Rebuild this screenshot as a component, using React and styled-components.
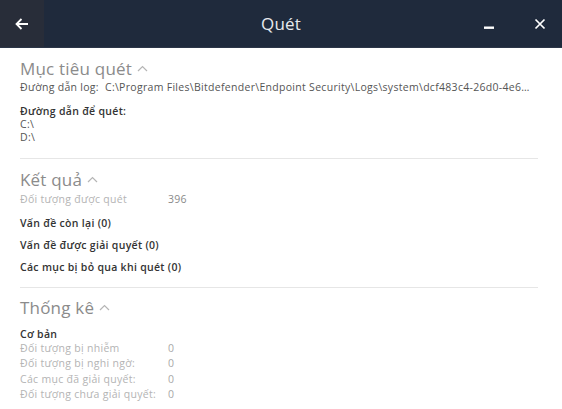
import React from "react";
import styled, { createGlobalStyle } from "styled-components";

const Global = createGlobalStyle`
  html, body { margin: 0; padding: 0; background: #fff; }
  body { font-family: "Open Sans", "Noto Sans", sans-serif; }
  * { box-sizing: border-box; }
`;

const Window = styled.div`
  width: 562px;
  height: 409px;
  background: #fff;
  overflow: hidden;
  display: flex;
  flex-direction: column;
`;

const Header = styled.header`
  height: 48px;
  flex: none;
  background: #1f2a3c;
  display: flex;
  align-items: stretch;
  border-bottom: 1px solid #2c3648;
`;

const BackButton = styled.div`
  width: 44px;
  background: #282d39;
  display: flex;
  align-items: center;
  justify-content: center;
  color: #fff;
`;

const Title = styled.div`
  flex: 1;
  display: flex;
  align-items: center;
  justify-content: center;
  color: #e8eaee;
  font-size: 17px;
  letter-spacing: 0.2px;
  padding-left: 51px;
`;

const Controls = styled.div`
  display: flex;
  align-items: stretch;
  gap: 7px;
`;

const CtrlBtn = styled.div`
  width: 44px;
  display: flex;
  align-items: center;
  justify-content: center;
  color: #fff;
`;

const Content = styled.main`
  padding: 3px 24px 0 20px;
  display: flex;
  flex-direction: column;
`;

const Section = styled.section`
  padding: 4px 0 ${p => p.$pb || 14}px;
  border-bottom: ${p => (p.$last ? "none" : "1px solid #e6e6e6")};
  margin-bottom: 3px;
`;

const Heading = styled.h2`
  margin: 0;
  font-weight: 400;
  font-size: 17px;
  letter-spacing: 0.2px;
  color: #8b8b8b;
  display: flex;
  align-items: center;
  gap: 5px;
  height: 26px;
`;

const Line = styled.div`
  font-size: 10.5px;
  letter-spacing: 0.3px;
  line-height: 13px;
  color: ${p => (p.$strong ? "#333" : "#555")};
  font-weight: ${p => (p.$strong ? 600 : 400)};
  margin-top: ${p => p.$mt || 0}px;
  white-space: nowrap;
`;

const KV = styled.div`
  display: grid;
  grid-template-columns: 148px auto;
  font-size: 10.5px;
  letter-spacing: 0.3px;
  line-height: 15.5px;
  color: #b4b4b4;
  margin-top: ${p => p.$mt || 0}px;
  margin-bottom: ${p => p.$mb || 0}px;
  white-space: nowrap;
`;

const Value = styled.span`
  color: ${p => (p.$dark ? "#8a8a8a" : "#a8a8a8")};
`;

const Issue = styled.div`
  font-size: 10.5px;
  letter-spacing: 0.3px;
  font-weight: 600;
  color: #333;
  line-height: 22px;
`;

const Issues = styled.div`
  margin-top: 4px;
`;

const Chevron = () => (
  <svg width="11" height="7" viewBox="0 0 11 7" fill="none">
    <path d="M1 6 L5.5 1.5 L10 6" stroke="#b5b5b5" strokeWidth="1.2" />
  </svg>
);

export default function App() {
  return (
    <Window>
      <Global />
      <Header>
        <BackButton>
          <svg width="14" height="12" viewBox="0 0 14 12" fill="none">
            <path d="M13 6 H1.5 M6.5 1 L1.5 6 L6.5 11" stroke="#fff" strokeWidth="1.8" />
          </svg>
        </BackButton>
        <Title>Quét</Title>
        <Controls>
          <CtrlBtn>
            <svg width="12" height="12" viewBox="0 0 12 12">
              <rect x="1" y="8.5" width="10" height="2.4" fill="#fff" />
            </svg>
          </CtrlBtn>
          <CtrlBtn>
            <svg width="12" height="12" viewBox="0 0 12 12" fill="none">
              <path d="M1.5 1.5 L10.5 10.5 M10.5 1.5 L1.5 10.5" stroke="#fff" strokeWidth="1.7" />
            </svg>
          </CtrlBtn>
        </Controls>
      </Header>
      <Content>
        <Section $pb={14}>
          <Heading>Mục tiêu quét <Chevron /></Heading>
          <Line>Đường dẫn log:&nbsp; C:\Program Files\Bitdefender\Endpoint Security\Logs\system\dcf483c4-26d0-4e6…</Line>
          <Line $strong $mt={11}>Đường dẫn để quét:</Line>
          <Line>C:\</Line>
          <Line>D:\</Line>
        </Section>
        <Section $pb={9}>
          <Heading>Kết quả <Chevron /></Heading>
          <KV><span>Đối tượng được quét</span><Value $dark>396</Value></KV>
          <Issues>
            <Issue>Vấn đề còn lại (0)</Issue>
            <Issue>Vấn đề được giải quyết (0)</Issue>
            <Issue>Các mục bị bỏ qua khi quét (0)</Issue>
          </Issues>
        </Section>
        <Section $last>
          <Heading>Thống kê <Chevron /></Heading>
          <Line $strong $mt={7}>Cơ bản</Line>
          <KV><span>Đối tượng bị nhiễm</span><Value>0</Value></KV>
          <KV><span>Đối tượng bị nghi ngờ:</span><Value>0</Value></KV>
          <KV><span>Các mục đã giải quyết:</span><Value>0</Value></KV>
          <KV><span>Đối tượng chưa giải quyết:</span><Value>0</Value></KV>
        </Section>
      </Content>
    </Window>
  );
}
